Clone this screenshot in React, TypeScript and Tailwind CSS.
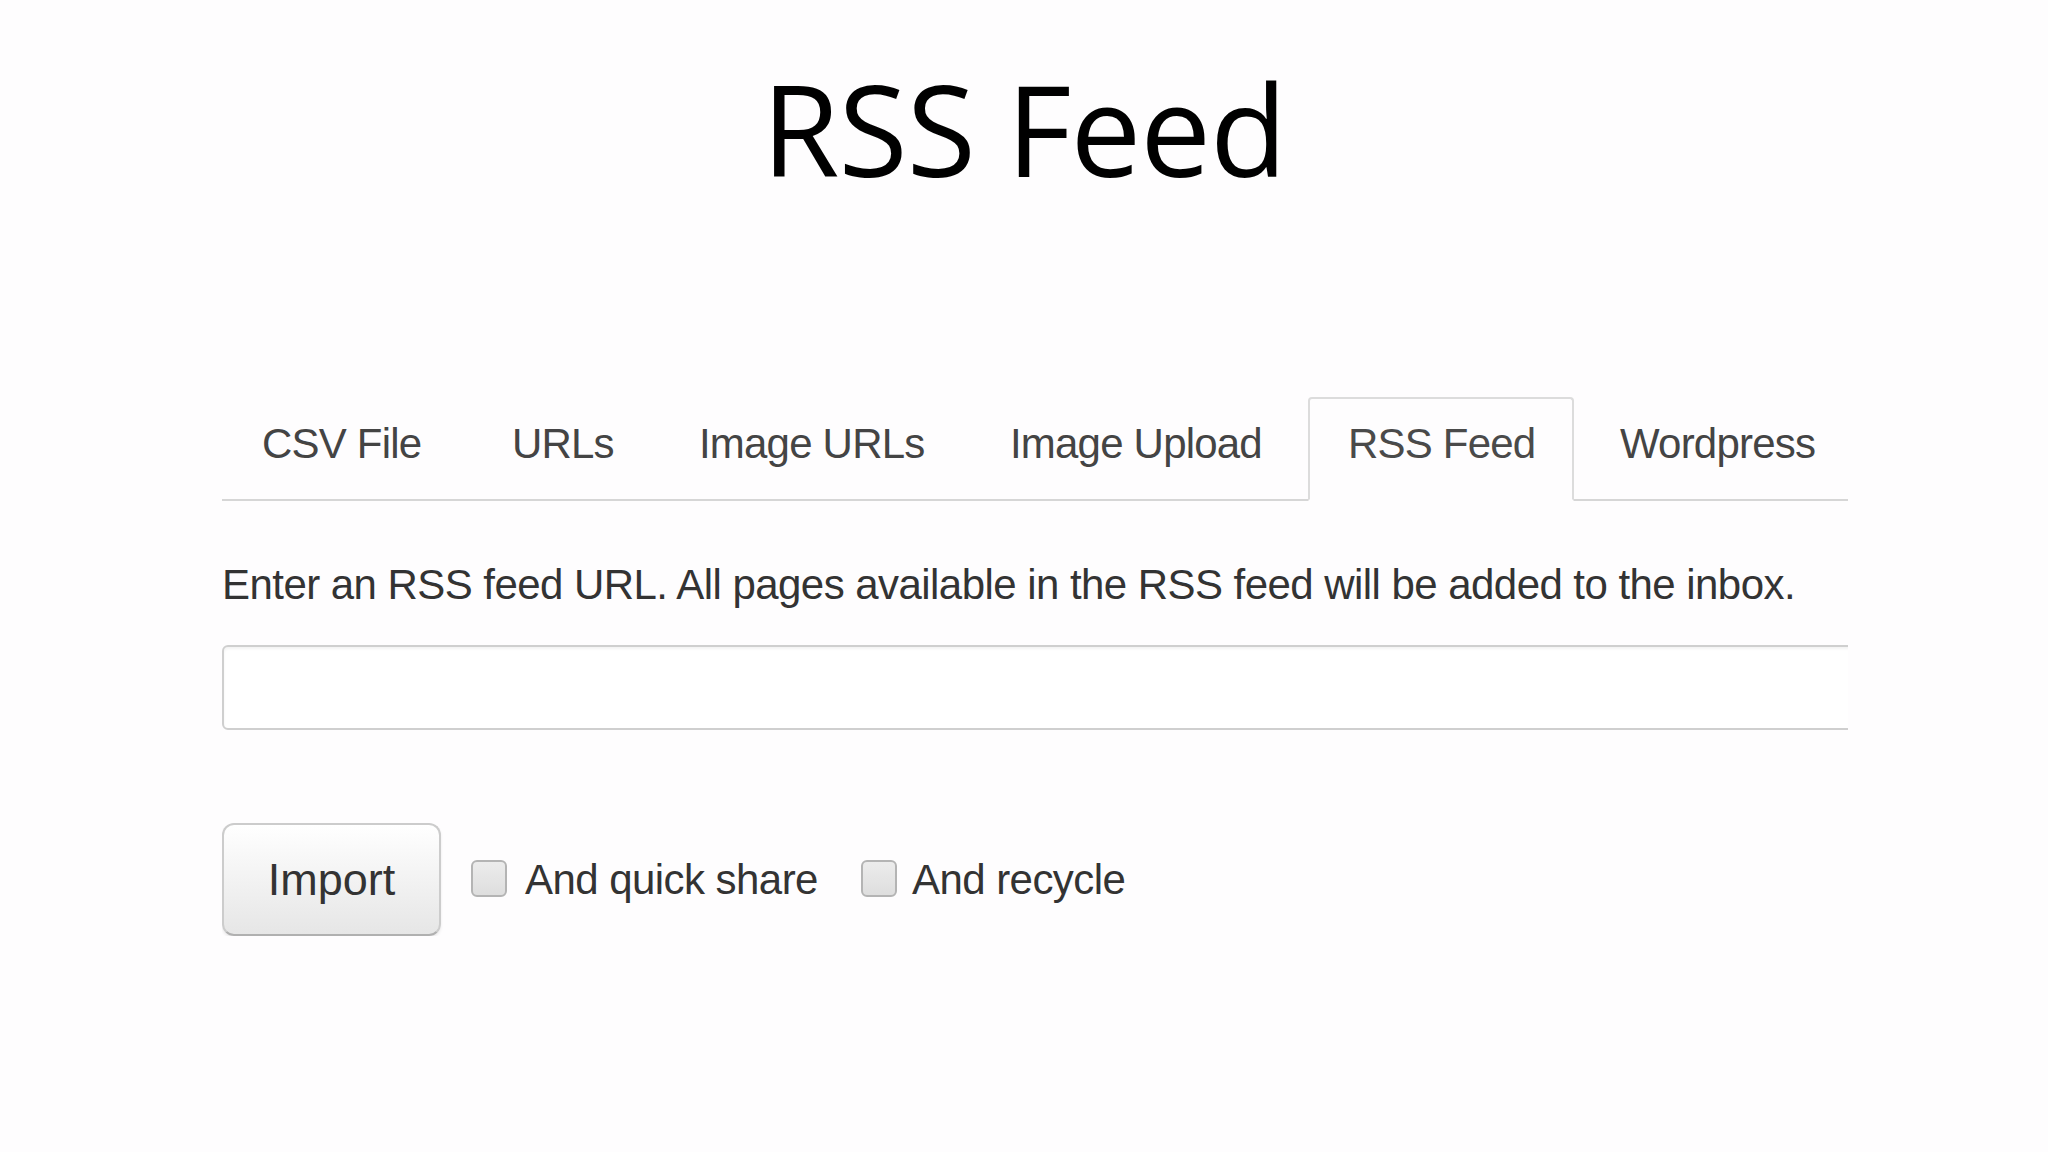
import React from "react";

const tabs = [
  { label: "CSV File", w: "w-[244px]" },
  { label: "URLs", w: "w-[181px]" },
  { label: "Image URLs", w: "w-[305px]" },
  { label: "Image Upload", w: "w-[332px]" },
  { label: "RSS Feed", w: "w-[266px]", active: true },
  { label: "Wordpress", w: "w-[273px]" },
];

function Checkbox() {
  return (
    <span className="inline-block w-[36px] h-[37px] rounded-[6px] border-2 border-[#b4b4b4] bg-gradient-to-b from-[#ececec] to-[#dedede] shrink-0" />
  );
}

export default function App() {
  return (
    <div className="min-h-[1152px] w-full bg-[#fefdfe] text-[#333]" style={{ fontFamily: '"Liberation Sans", Arial, sans-serif' }}>
      <div
        className="pt-[65px] text-center text-[126px] leading-none text-black tracking-[-1px]"
        style={{ fontFamily: '"Open Sans", "Noto Sans", sans-serif' }}
      >
        RSS Feed
      </div>

      <div className="ml-[222px] mt-[206px] w-[1626px] overflow-hidden">
        <ul className="flex border-b-2 border-[#d6d6d6]">
          {tabs.map((t) => (
            <li
              key={t.label}
              className={
                "mr-[6px] -mb-[2px] shrink-0 border-2 rounded-t-[4px] pl-[38px] pt-[15px] pb-[25px] text-[42px] leading-[60px] tracking-[-0.8px] whitespace-nowrap " +
                t.w +
                (t.active
                  ? " border-[#dcdcdc] border-b-transparent bg-[#fefdfe] text-[#4a4a4a]"
                  : " border-transparent text-[#444]")
              }
            >
              {t.label}
            </li>
          ))}
        </ul>

        <p className="mt-[54px] text-[42px] leading-[60px] tracking-[-0.55px] text-[#333] whitespace-nowrap">
          Enter an RSS feed URL. All pages available in the RSS feed will be added to the inbox.
        </p>

        <div className="mt-[30px] h-[85px] w-[1700px] rounded-[6px] border-2 border-[#cfcfcf] bg-white shadow-[inset_0_2px_3px_rgba(0,0,0,0.05)]" />

        <div className="mt-[93px] flex items-center">
          <button className="w-[219px] h-[113px] rounded-[12px] border-2 border-[#cccccc] border-b-[#b0b0b0] bg-gradient-to-b from-[#ffffff] to-[#e6e6e6] text-[45px] text-[#333] shadow-[0_2px_3px_rgba(0,0,0,0.08)]">
            Import
          </button>
          <span className="ml-[30px] -mt-[2px] flex">
            <Checkbox />
          </span>
          <span className="ml-[18px] text-[42px] leading-[60px] tracking-[-0.55px] text-[#333]">And quick share</span>
          <span className="ml-[43px] -mt-[2px] flex">
            <Checkbox />
          </span>
          <span className="ml-[15px] text-[42px] leading-[60px] tracking-[-0.55px] text-[#333]">And recycle</span>
        </div>
      </div>
    </div>
  );
}
